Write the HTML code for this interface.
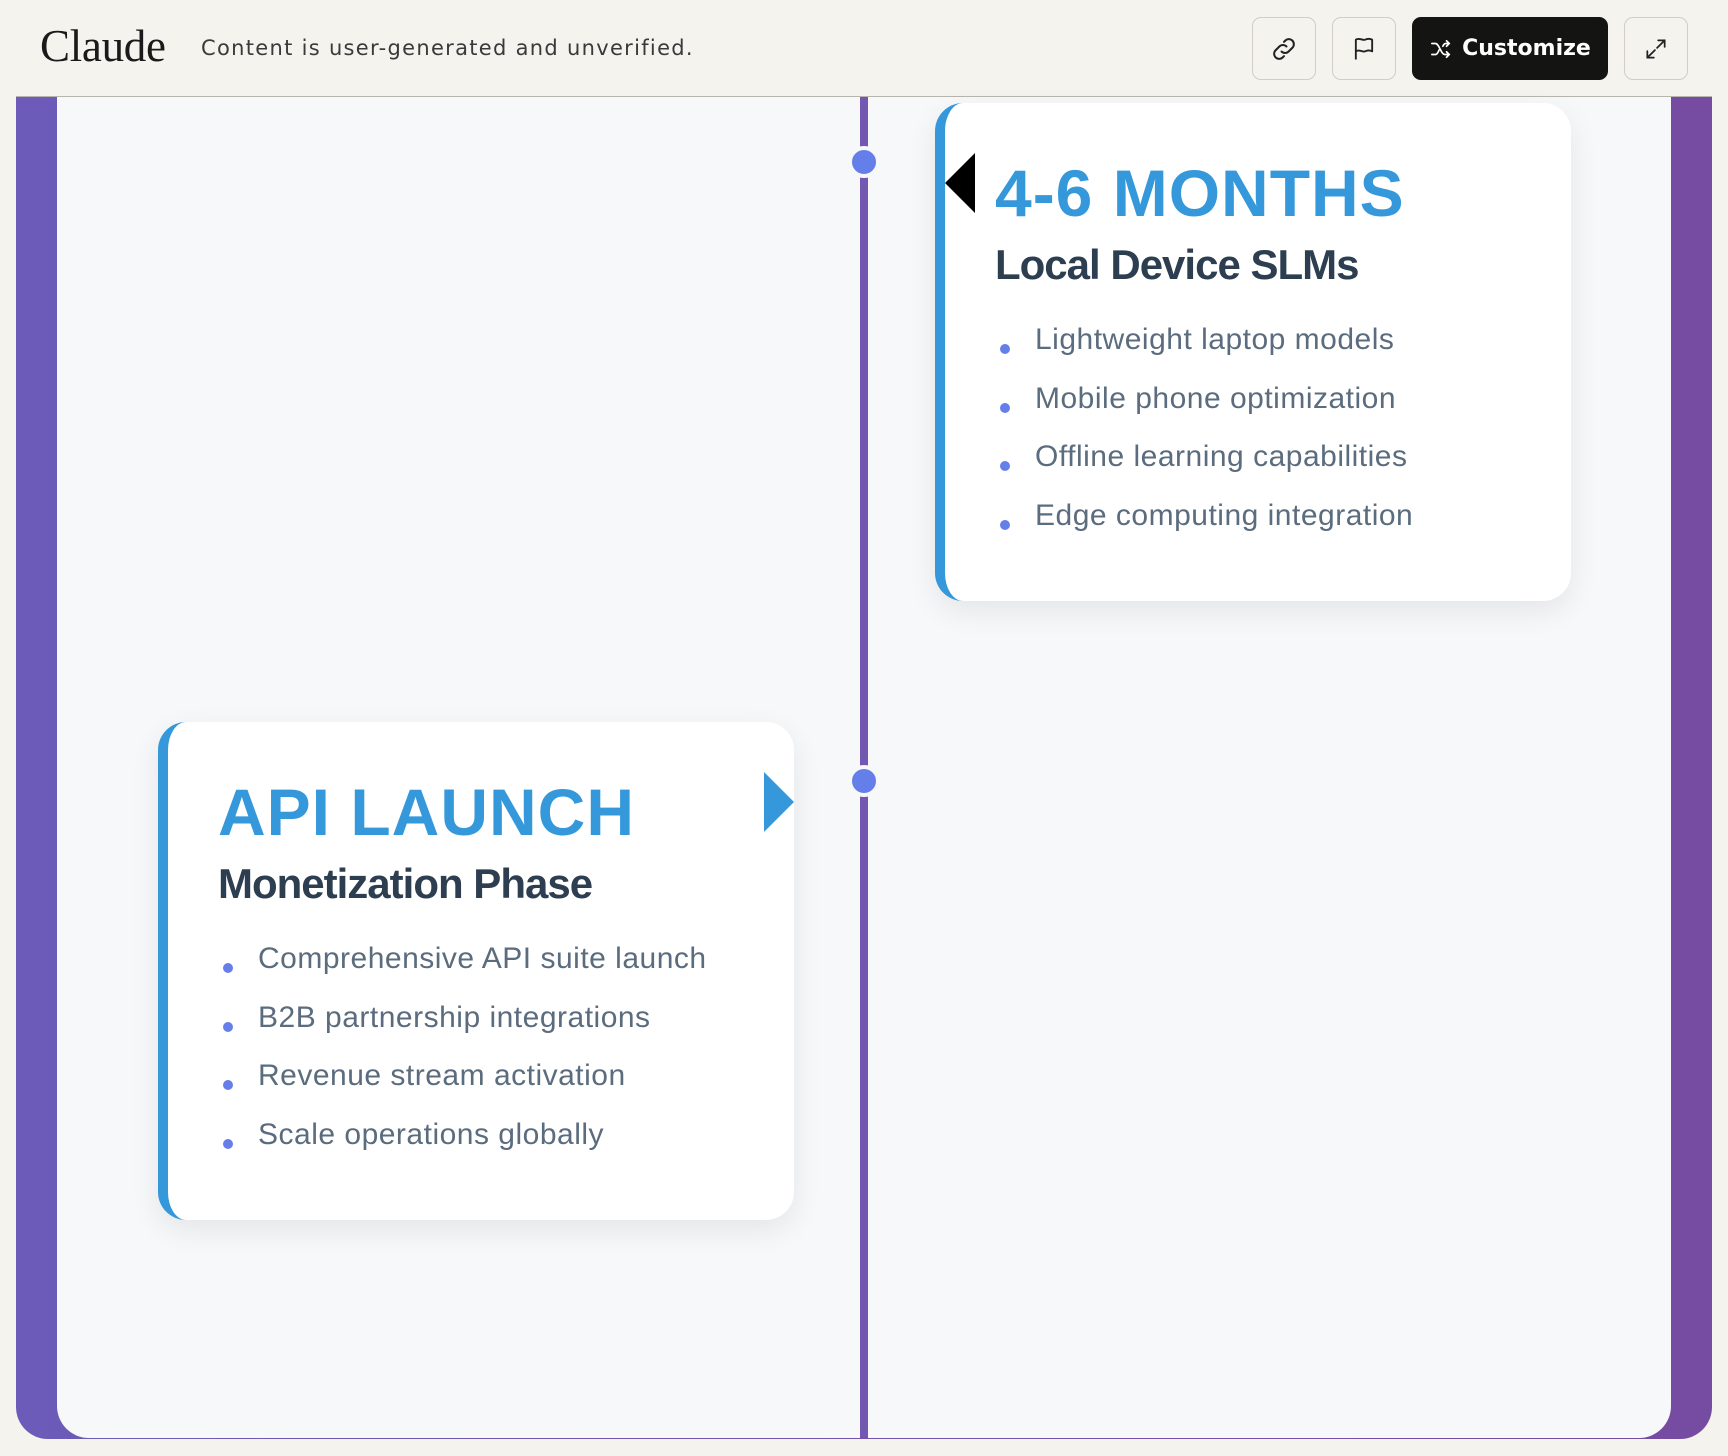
<!DOCTYPE html>
<html><head><meta charset="utf-8"><style>
*{box-sizing:border-box;margin:0;padding:0}
body{width:1728px;height:1456px;background:#f4f3ee;position:relative;overflow:hidden;font-family:"Liberation Sans",sans-serif}
.logo{position:absolute;left:40px;top:20px;font-family:"Liberation Serif",serif;font-size:45px;color:#1a1a1a;letter-spacing:-0.3px}
.note{position:absolute;left:201px;top:36px;font-family:"DejaVu Sans",sans-serif;font-size:21px;color:#3a3a3a;letter-spacing:1.3px}
.btn{position:absolute;top:17px;height:63px;border:1px solid #cfcdc5;border-radius:9px;background:#f4f3ee;display:flex;align-items:center;justify-content:center}
.cust{background:#141413;border-color:#141413;color:#fff;font-weight:bold;font-size:22px;gap:9px;font-family:"DejaVu Sans",sans-serif}
.frame{position:absolute;left:16px;top:96px;width:1696px;height:1343px;border-radius:0 0 32px 32px;background:linear-gradient(90deg,#6c5bb8,#764ba2);border-top:1px solid #b8b5ad}
.inner{position:absolute;left:57px;top:97px;width:1614px;height:1341px;background:#f7f8fa;border-radius:0 0 32px 32px}
.line{position:absolute;left:860px;top:97px;width:8px;height:1341px;background:#7357b0}
.dot{position:absolute;width:32px;height:32px;border-radius:50%;background:#667eea;border:4px solid #f7f8fa}
.card{position:absolute;width:636px;height:498px;background:#fff;border-radius:28px;border-left:10px solid #3498db;box-shadow:0 10px 30px rgba(0,0,0,0.08)}
.card h2{position:absolute;left:50px;top:52px;font-size:66px;font-weight:bold;color:#3498db;letter-spacing:1px;white-space:nowrap}
.card h3{position:absolute;left:50px;top:138px;font-size:42px;font-weight:bold;color:#2c3e50;letter-spacing:-1px;white-space:nowrap}
.card ul{position:absolute;left:50px;top:217px;list-style:none}
.card li{position:relative;padding-left:40px;font-size:30px;color:#5a6c7d;height:58.5px;line-height:40px;letter-spacing:0.5px;white-space:nowrap}
.card li:before{content:"";position:absolute;left:5px;top:24px;width:10px;height:10px;border-radius:50%;background:#667eea}
</style></head><body>
<div class="logo">Claude</div>
<div class="note">Content is user-generated and unverified.</div>
<div class="btn" style="left:1252px;width:64px"><svg width="30" height="30" viewBox="0 0 24 24" fill="none" stroke="#222" stroke-width="1.6" stroke-linecap="round"><path d="M10 14a4 4 0 0 0 5.7 0l3-3a4 4 0 0 0-5.7-5.7l-1 1"/><path d="M14 10a4 4 0 0 0-5.7 0l-3 3a4 4 0 0 0 5.7 5.7l1-1"/></svg></div>
<div class="btn" style="left:1332px;width:64px"><svg width="28" height="28" viewBox="0 0 24 24" fill="none" stroke="#222" stroke-width="1.6" stroke-linejoin="round"><path d="M5 21V4c3-2 6 1 8 0s4-1 6 0v10c-2-1-4-1-6 0s-5-2-8 0"/></svg></div>
<div class="btn cust" style="left:1412px;width:196px"><svg width="24" height="22" viewBox="0 0 24 24" fill="none" stroke="#fff" stroke-width="1.8" stroke-linecap="round"><path d="M2 6h4c4 0 6 12 10 12h5M2 18h4c2 0 3-3 4-5M14 9c1-2 2-3 3-3h4M18 3l3 3-3 3M18 15l3 3-3 3"/></svg>Customize</div>
<div class="btn" style="left:1624px;width:64px"><svg width="26" height="26" viewBox="0 0 24 24" fill="none" stroke="#222" stroke-width="1.6" stroke-linecap="round"><path d="M14 4h6v6M20 4l-7 7M10 20H4v-6M4 20l7-7"/></svg></div>
<div class="frame"></div>
<div class="inner"></div>
<div class="line"></div>
<div class="dot" style="left:848px;top:146px"></div>
<div class="dot" style="left:848px;top:765px"></div>
<div class="card" style="left:935px;top:103px">
<div style="position:absolute;left:0;top:50px;width:0;height:0;border-top:30px solid transparent;border-bottom:30px solid transparent;border-right:30px solid #000"></div>
<h2>4-6 MONTHS</h2><h3>Local Device SLMs</h3>
<ul><li>Lightweight laptop models</li><li>Mobile phone optimization</li><li>Offline learning capabilities</li><li>Edge computing integration</li></ul>
</div>
<div class="card" style="left:158px;top:722px">
<div style="position:absolute;right:0;top:50px;width:0;height:0;border-top:30px solid transparent;border-bottom:30px solid transparent;border-left:30px solid #3498db"></div>
<h2>API LAUNCH</h2><h3>Monetization Phase</h3>
<ul><li>Comprehensive API suite launch</li><li>B2B partnership integrations</li><li>Revenue stream activation</li><li>Scale operations globally</li></ul>
</div>
</body></html>
